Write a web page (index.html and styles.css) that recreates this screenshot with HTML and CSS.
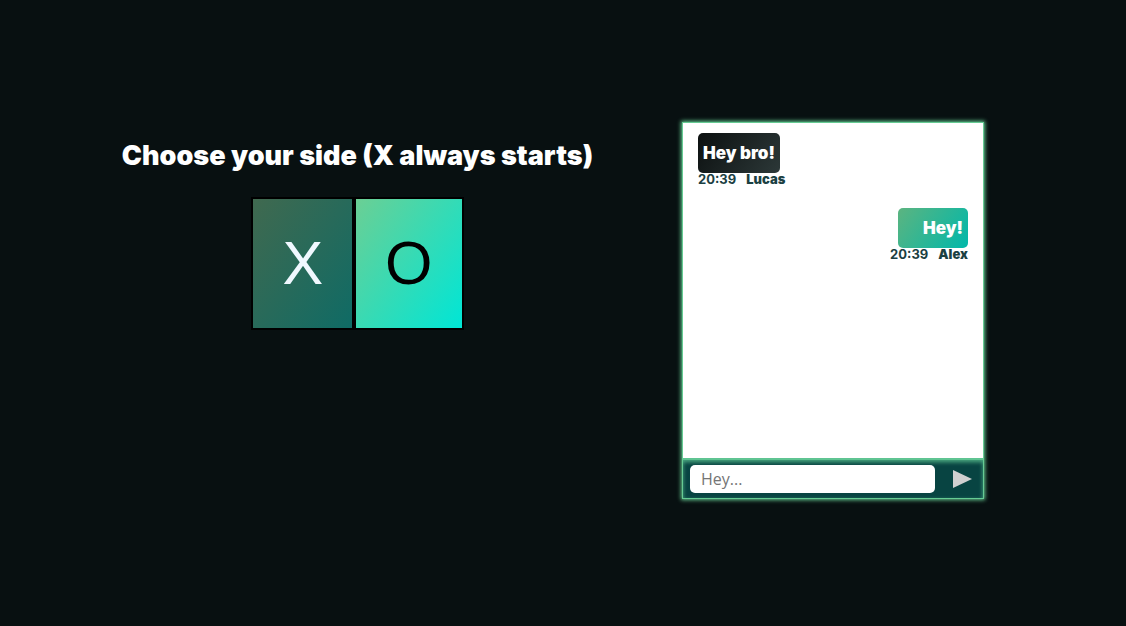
FILE: index.html
```html
<!DOCTYPE html>
<html lang="en">
<head>
<meta charset="utf-8">
<title>Tic Tac Toe</title>
<link rel="stylesheet" href="styles.css">
</head>
<body>
<main class="page">
  <section class="chooser">
    <h1 class="title">Choose your side (X always starts)</h1>
    <div class="sides">
      <button class="side side-x" type="button">X</button>
      <button class="side side-o" type="button">O</button>
    </div>
  </section>
  <section class="chat" aria-label="Chat">
    <div class="messages">
      <article class="message">
        <p class="bubble">Hey bro!</p>
        <p class="meta"><time class="time">20:39</time><span>Lucas</span></p>
      </article>
      <article class="message own">
        <p class="bubble">Hey!</p>
        <p class="meta"><time class="time">20:39</time><span>Alex</span></p>
      </article>
    </div>
    <form class="composer">
      <input class="field" type="text" placeholder="Hey..." aria-label="Message">
      <button class="send" type="button" aria-label="Send">
        <svg width="19" height="18" viewBox="0 0 19 18"><path d="M0 0L19 9L0 18Z" fill="#d0d0d0"/></svg>
      </button>
    </form>
  </section>
</main>
</body>
</html>
```
FILE: styles.css
```css
* { box-sizing: border-box; }

body {
  margin: 0;
  background: #081011;
  color: #fff;
  font-family: Inter, "Open Sans", sans-serif;
}

.page {
  display: flex;
  align-items: center;
  min-height: 100vh;
  padding: 0 142px 5px 33px;
}

.chooser {
  flex: 1;
  align-self: stretch;
  display: flex;
  flex-direction: column;
  align-items: center;
  padding-top: 140px;
}

.title {
  margin: 0 0 25px;
  font-size: 27px;
  line-height: 32px;
  font-weight: 900;
  white-space: nowrap;
}

.sides { display: flex; }

.side {
  padding: 29px;
  border: 2px solid #000;
  font: 61px/71px "Liberation Sans", Arial, sans-serif;
}

.side-x {
  background: linear-gradient(125deg, #40694f, #0f6b65);
  color: #f0f8ff;
}

.side-o {
  background: linear-gradient(125deg, #6bcf94, #00e6d6);
  color: #000;
}

.chat {
  width: 302px;
  border: 1px solid #66cc94;
  background: #fff;
  box-shadow: 0 0 4px 1px #66cc94;
}

.messages {
  min-height: 335px;
  padding: 10px 15px;
}

.message {
  display: flex;
  flex-direction: column;
  align-items: flex-start;
  margin-bottom: 22px;
}

.bubble {
  margin: 0;
  padding: 10px 5px;
  border-radius: 5px;
  background: linear-gradient(125deg, #0c1010, #2c3838);
  font-size: 17px;
  line-height: 20px;
  font-weight: 900;
}

.own { align-items: flex-end; }

.own .bubble {
  min-width: 70px;
  background: linear-gradient(125deg, #5cb480, #00b8aa);
  text-align: right;
}

.meta {
  display: flex;
  gap: 10px;
  margin: 0;
  color: #1b4042;
  font-size: 13px;
  line-height: 13px;
  font-weight: 900;
}

.time { font-weight: 700; }

.composer {
  display: flex;
  align-items: center;
  height: 40px;
  padding: 0 11px 0 7px;
  border-top: 2px solid #5fc492;
  background: #084442;
  box-shadow: inset 0 2px 4px #4fae84;
}

.field {
  flex: 1;
  min-width: 0;
  height: 28px;
  margin-right: 18px;
  padding: 0 11px;
  border: 0;
  border-radius: 5px;
  background: #fff;
  font: 16px "Open Sans", sans-serif;
}

.field::placeholder { color: #757575; }

.send {
  display: flex;
  padding: 0;
  border: 0;
  background: none;
}
```
